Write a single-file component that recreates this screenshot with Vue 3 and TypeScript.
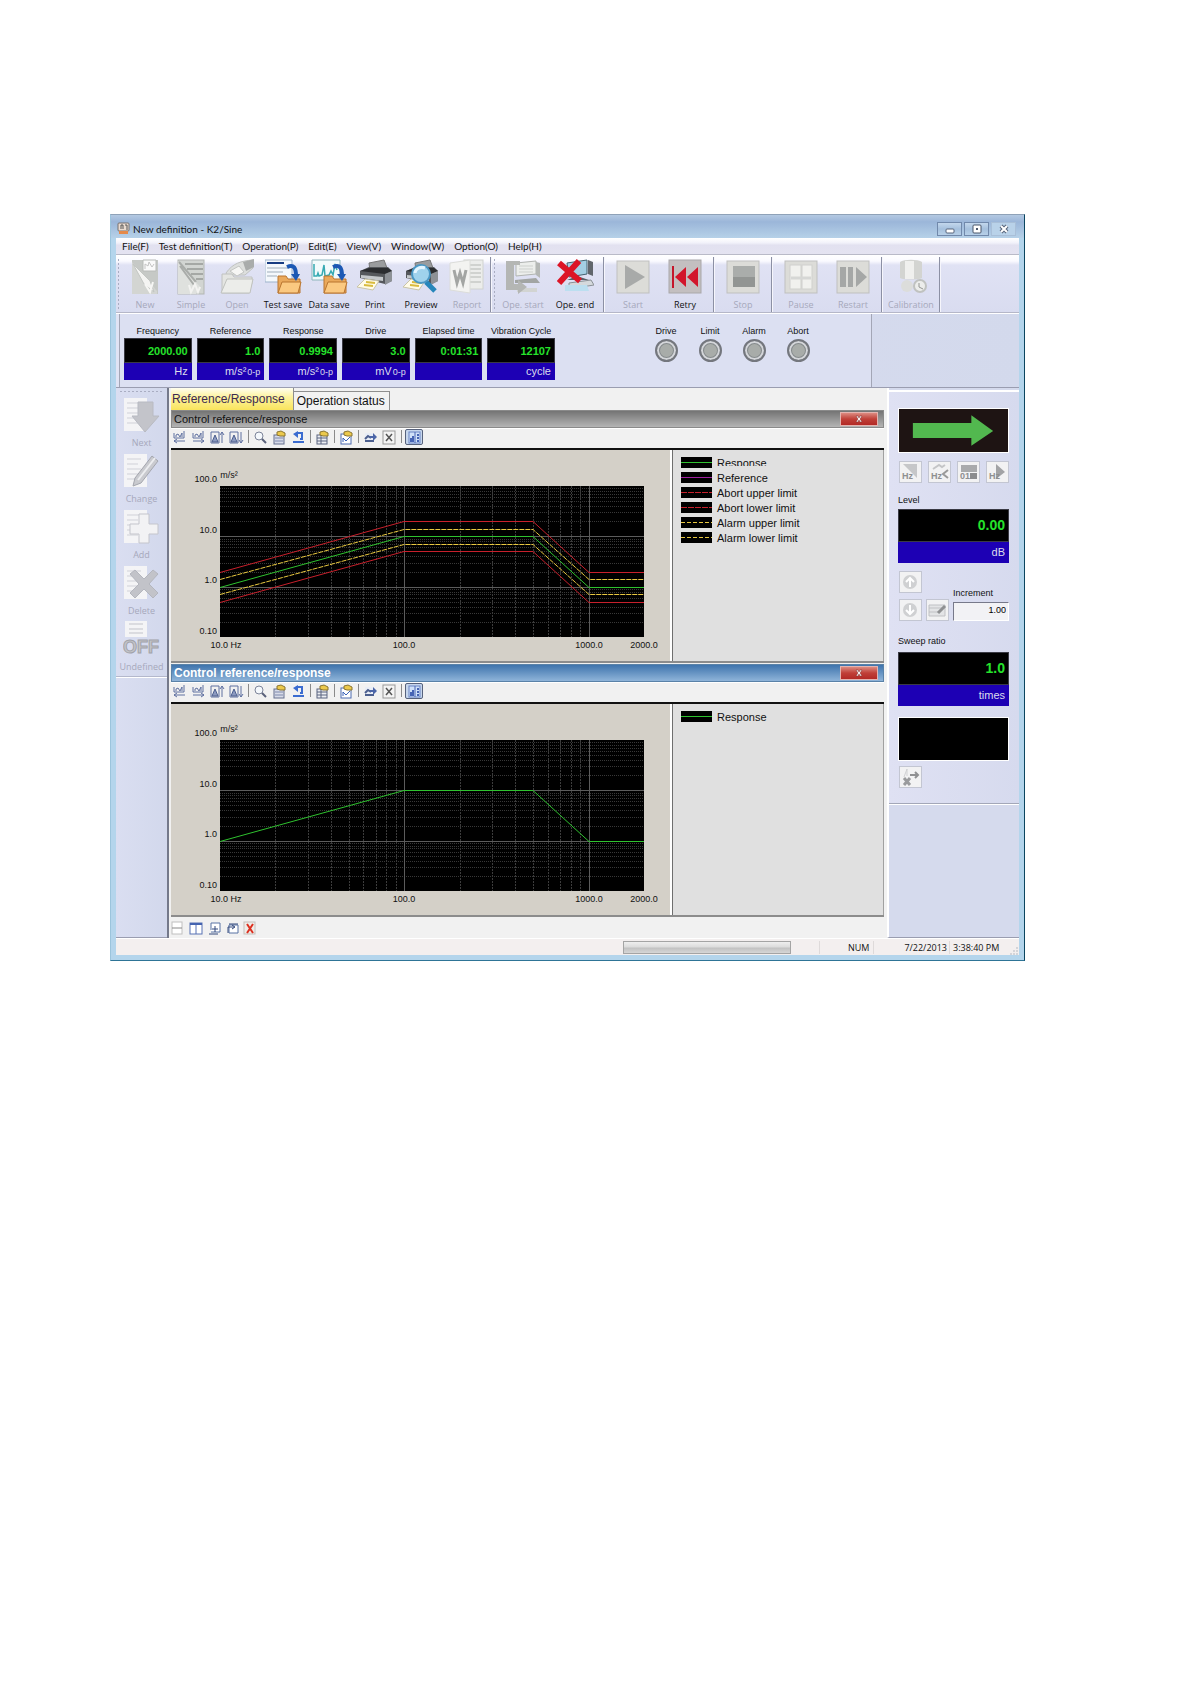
<script setup lang="ts">
import { ref } from 'vue'

interface Tool {
  label: string
  icon: string
  enabled?: boolean
}

interface Trace {
  name: string
  color: string
  factor: number
  dash?: string
  swatchDash?: string
  hidden?: boolean
}

const menus: string[] = [
  'File(F)', 'Test definition(T)', 'Operation(P)', 'Edit(E)',
  'View(V)', 'Window(W)', 'Option(O)', 'Help(H)',
]

const folder = (front: string, back: string, edge: string): string =>
  `<path d="M13 34V17h8l2 3h12v14z" fill="${back}" stroke="${edge}"/><path d="M13 34l4-11h19l-3 11z" fill="${front}" stroke="${edge}"/>`

const curl = '<path d="M22 8c7-3 9 1 9 9" fill="none" stroke="#1c58b4" stroke-width="4"/><path d="M26 15h9l-4 7z" fill="#1c58b4"/>'

const printer = '<path d="M12 4l15-3 3 8-17 3z" fill="#9a9c9e" stroke="#777"/><path d="M3 12l9-4h19l4 4v10l-7 3L3 19z" fill="#55585c"/><path d="M3 12l9-3h19l4 3-7 3z" fill="#2b2d30"/><path d="M28 15l7-3v10l-7 4z" fill="#8d9196"/><path d="M4 16l22 2v4L4 19z" fill="#c4c8cb"/><path d="M8 20l14 2-6 9-16-3z" fill="#fffbe8" stroke="#c9c4a6"/><path d="M9 23l9 1M7 26l9 1" stroke="#d9bb3e" stroke-width="2"/>'

const square = '<rect x="2" y="2" width="32" height="32" fill="#dcdcd8" stroke="#bfc0bf"/>'

const bigIcons: Record<string, string> = {
  new: '<rect x="5" y="1" width="26" height="34" fill="#c6c9c6"/><path d="M16 1h13v11H16z" fill="#fafafa" stroke="#b8bbb8"/><path d="M18 10V5l3 2 1-4 3 5 2-3" fill="none" stroke="#c4c4c4"/><path d="M5 3l25 29v3H5z" fill="#d3d5d2"/><path d="M6 5l17 17 4 11-10-8z" fill="#f4f4f2" stroke="#c3c6c3"/><path d="M18 25l5 8 3-10" fill="none" stroke="#f6f6f4" stroke-width="2"/>',
  simple: '<rect x="5" y="1" width="26" height="34" fill="#d2d5d2" stroke="#b3b6b3"/><path d="M12 5h18M14 10h16M18 15h12M23 20h7" stroke="#a5a8a5" stroke-width="2"/><path d="M5 2l23 27-5 6H5z" fill="#dfe1de"/><path d="M6 3l17 20M7 7l14 19" stroke="#a9aca9" stroke-width="2"/><path d="M16 26l2 7 4-8 3 8 2-5" fill="none" stroke="#f3f3f1" stroke-width="2"/>',
  open: '<path d="M7 14C14 4 22 2 34 1v8l-8 7H8z" fill="#dddfdd" stroke="#c0c2c0"/><path d="M24 3l11-3v8l-8 4z" fill="#a9acab"/><path d="M11 12l9-5 5 6-7 4z" fill="#f6f6f4" stroke="#c3c5c3"/><path d="M3 34V15h10l2 3h18v6l-3 10z" fill="#e4e5e2" stroke="#c0c2c0"/><path d="M2 34l6-14h26l-3 14z" fill="#ecedea" stroke="#c0c2be"/>',
  testsave: '<path d="M0 1h27v22H0z" fill="#f4f8fc" stroke="#9db3cb"/><path d="M2 4h17" stroke="#173c82" stroke-width="2"/><path d="M2 9h22M2 13h16M2 17h10" stroke="#9fadba"/>' + folder('#fbc980', '#eaa95b', '#b9752f') + curl,
  datasave: '<path d="M1 1h28v20H1z" fill="#f2fbfb" stroke="#8fb5bc"/><path d="M3 5v12h3l1-3 1 3 3-1 2-10 1 11 4-1 2-4 2 4 2-11 2 6" fill="none" stroke="#36aab2" stroke-width="1.5"/>' + folder('#fbc980', '#eaa95b', '#b9752f') + curl,
  print: printer,
  preview: printer + '<path d="M23 23l9 9" stroke="#2686ba" stroke-width="5"/><circle cx="18" cy="15" r="9" fill="#9fd2ec" stroke="#4a97c4" stroke-width="2"/><path d="M12 14a7 6 0 0 1 10-5" fill="none" stroke="#e3f5ff" stroke-width="3"/>',
  report: '<rect x="15" y="1" width="19" height="29" fill="#ecedeb" stroke="#d0d2cf"/><path d="M21 6h11M21 10h11M21 14h11M21 18h11M21 23h11" stroke="#b4b7b3"/><path d="M1 4l20-3v33L1 31z" fill="#f3f3f1" stroke="#dcddda"/><path d="M5 11l3 13 3-10 3 10 3-13" fill="none" stroke="#a3a5a3" stroke-width="3"/>',
  opestart: '<path d="M11 4l20-2v13l-20 2z" fill="#eceeec" stroke="#b1b4b1"/><path d="M14 7h14M14 10h14M14 13h14" stroke="#cdd0cd"/><path d="M10 21l21-2 4 5H10z" fill="#a2a5a3"/><path d="M31 3l4 1v15l-4-3z" fill="#b4b7b5"/><path d="M12 29h20v4H12z" fill="#d2d4d2"/><path d="M1 2h14v4H9v19h4v-4l9 7-9 7v-4H1z" fill="#b4b6b4"/>',
  opeend: '<path d="M10 4l20-3v14l-18 3z" fill="#a4cfe4" stroke="#43626f"/><path d="M20 17l12 4H10z" fill="#596068"/><path d="M31 1l5 2v14l-5-2z" fill="#61666c"/><path d="M12 24l22-3 3 5-25 4z" fill="#d5d9dc" stroke="#8a9095"/><path d="M8 26h22l2 6H8z" fill="#bcdff0"/><path d="M2 4l21 18M22 2L2 24" stroke="#dc1526" stroke-width="6"/>',
  start: square + '<path d="M10 6v24l20-12z" fill="#a8aaa9"/>',
  retry: '<rect x="2" y="1" width="32" height="33" fill="#c3bfc0" stroke="#a9a8aa"/><path d="M5 7h2v22H5z" fill="#c5162b"/><path d="M19 8v20L8 18zM31 8v20L20 18z" fill="#d2152b"/>',
  stop: square + '<rect x="8" y="7" width="22" height="11" fill="#aaadab"/><rect x="8" y="18" width="22" height="10" fill="#929593"/>',
  pause: square + '<rect x="7" y="6" width="11" height="24" fill="#f1f1ee" stroke="#cfd0cd"/><rect x="19" y="6" width="10" height="24" fill="#f1f1ee" stroke="#cfd0cd"/><path d="M8 19h20" stroke="#d6d7d5" stroke-width="3"/>',
  restart: square + '<path d="M5 8h6v20H5zM13 8h5v20h-5zM21 8v20l11-10z" fill="#a5a7a6"/>',
  calibration: '<path d="M7 3c4-3 18-3 22 0v16c-4 2-18 2-22 0z" fill="#d3d4d1"/><path d="M12 2h9v18h-9z" fill="#f0f0ee"/><circle cx="14" cy="27" r="6" fill="#dcdddb"/><circle cx="27" cy="27" r="6" fill="#ecedeb" stroke="#c0c2c0" stroke-width="2"/><path d="M26 24v4l4 2" fill="none" stroke="#949694"/>',
}

const sheet = '<rect x="1" y="1" width="23" height="33" fill="#f4f4f6"/><path d="M4 6h14M4 11h11M4 16h14M4 21h11M4 26h11" stroke="#d0d1d8"/>'

const sideIcons: Record<string, string> = {
  next: sheet + '<path d="M15 5h15v14h6L22 35 9 19h6z" fill="#c3c4ca" stroke="#b8bac2"/>',
  change: sheet + '<path d="M12 25L29 3l6 5-17 22-8 3z" fill="#c9cacf" stroke="#a4a6ae"/><path d="M15 27L32 5" stroke="#ecedf0" stroke-width="2"/>',
  add: sheet + '<path d="M16 5h10v10h9v10h-9v9H16v-9H7V15h9z" fill="#f2f2f4" stroke="#c4c5cc"/>',
  delete: sheet + '<path d="M7 9l5-4 9 9 9-9 5 4-9 10 9 9-5 5-9-9-9 9-5-5 9-9z" fill="#c2c3c9" stroke="#b4b6be"/>',
  undefined: '<path d="M2 0h22v16H2z" fill="#f4f4f6"/><path d="M6 3h14M6 8h14M6 12h14" stroke="#c2c3ca"/><text x="18" y="32" text-anchor="middle" font-family="Liberation Sans, Arial, sans-serif" font-weight="bold" font-size="18" fill="#c4c5ca" stroke="#a2a3a9">OFF</text>',
}

const mini = 'fill="none" stroke="#5f70a0"'
const hand = '<path d="M5 2l4-1 4 2v3H8L5 5z" fill="#ecc94c" stroke="#8a7530"/>'
const chartIcons: Record<string, string> = {
  left: `<path d="M2 8V3M2 8h10V1M4 7V5l2-1 2 3 2-4v4" ${mini}/><path d="M13 11H2M5 9l-3 2 3 2" ${mini}/>`,
  right: `<path d="M2 8V3M2 8h10V1M4 7V5l2-1 2 3 2-4v4" ${mini}/><path d="M2 11h11M10 9l3 2-3 2" ${mini}/>`,
  up: `<path d="M1 2h8v11H1z" ${mini}/><path d="M2 12l3-7 3 7z" fill="#8c9ac0" stroke="#4c5f8e"/><path d="M12 13V2M10 5l2-3 2 3" ${mini}/>`,
  down: `<path d="M1 2h8v11H1z" ${mini}/><path d="M2 12l3-7 3 7z" fill="#8c9ac0" stroke="#4c5f8e"/><path d="M12 2v11M10 10l2 3 2-3" ${mini}/>`,
  zoom: '<circle cx="6" cy="6" r="4" fill="#f4f8fc" stroke="#7c8499"/><path d="M9 9l4 4" stroke="#59617a" stroke-width="2"/>',
  props: '<rect x="2" y="5" width="10" height="9" fill="#d7dbe8" stroke="#66708f"/><path d="M3 8h8M3 11h8" stroke="#7f89ad"/>' + hand,
  undo: '<path d="M5 3h6v6H9" fill="none" stroke="#3b6cd0" stroke-width="2"/><path d="M2 4l5-3v7z" fill="#3b6cd0"/><path d="M2 12h11" stroke="#3b6cd0" stroke-width="2"/>',
  table: '<rect x="2" y="5" width="10" height="9" fill="#eceef2" stroke="#5b6480"/><path d="M2 8h10M2 11h10M6 5v9" stroke="#5b6480"/>' + hand,
  scale: '<rect x="2" y="4" width="10" height="10" fill="#fff" stroke="#4f6db0"/><path d="M4 12V8l3 3 4-4" fill="none" stroke="#3b62b8"/>' + hand,
  export: '<path d="M2 3h8v8H2z" fill="#e8edf6"/><path d="M2 11h9M2 9l3-3 3 2" fill="none" stroke="#4c5f8e" stroke-width="2"/><path d="M7 6h3V3l4 4-4 4V8H7z" fill="#4c66a8"/>',
  excel: '<rect x="1" y="1" width="12" height="13" fill="#f4f4f4" stroke="#999"/><path d="M4 4l6 7M10 4l-6 7" stroke="#555" stroke-width="1.5"/>',
  legend: '<rect x="2" y="2" width="11" height="11" fill="#cfe0f8" stroke="#6a84c4"/><path d="M8 2v11" stroke="#4a66b4"/><path d="M4 12V8M6 12V6M10 5h2M10 8h2M10 11h2" stroke="#4664b4" stroke-width="2"/>',
}
const chartTools: string[] = [
  'left', 'right', 'up', 'down', '|', 'zoom', 'props', 'undo', '|',
  'table', '|', 'scale', '|', 'export', 'excel', '|', 'legend',
]

const paneIcons: { label: string; art: string }[] = [
  { label: 'Split rows', art: '<rect x="1" y="1" width="10" height="12" fill="#fff" stroke="#c0c0c0"/><path d="M1 7h10" stroke="#888"/>' },
  { label: 'Split columns', art: '<rect x="1" y="2" width="12" height="11" fill="#fff" stroke="#5873b4"/><path d="M7 2v11" stroke="#5873b4"/><path d="M1 3h12" stroke="#4463b0" stroke-width="2"/>' },
  { label: 'Minimize', art: '<path d="M4 9V2h9v9H4" fill="#fff" stroke="#5873a4"/><path d="M2 13h9M5 8h6M8 5v6" stroke="#33487c"/>' },
  { label: 'Restore', art: '<path d="M4 4h9v8H4z" fill="#fff" stroke="#5873a4"/><path d="M3 12V6h6M7 4l3 2-3 2M4 3h9" fill="none" stroke="#33487c"/>' },
  { label: 'Close', art: '<rect x="1" y="1" width="11" height="12" fill="#f0ece8" stroke="#c4c0bc"/><path d="M4 3l6 9M10 3l-6 9" stroke="#dc3020" stroke-width="2"/>' },
]

const toolGroups: Tool[][] = [
  [
    { label: 'New', icon: 'new' },
    { label: 'Simple', icon: 'simple' },
    { label: 'Open', icon: 'open' },
    { label: 'Test save', icon: 'testsave', enabled: true },
    { label: 'Data save', icon: 'datasave', enabled: true },
    { label: 'Print', icon: 'print', enabled: true },
    { label: 'Preview', icon: 'preview', enabled: true },
    { label: 'Report', icon: 'report' },
  ],
  [
    { label: 'Ope. start', icon: 'opestart' },
    { label: 'Ope. end', icon: 'opeend', enabled: true },
  ],
  [
    { label: 'Start', icon: 'start' },
    { label: 'Retry', icon: 'retry', enabled: true },
  ],
  [{ label: 'Stop', icon: 'stop' }],
  [
    { label: 'Pause', icon: 'pause' },
    { label: 'Restart', icon: 'restart' },
  ],
  [{ label: 'Calibration', icon: 'calibration' }],
]

const meters = [
  { label: 'Frequency', value: '2000.00', unit: 'Hz' },
  { label: 'Reference', value: '1.0', unit: 'm/s²', suffix: '0-p' },
  { label: 'Response', value: '0.9994', unit: 'm/s²', suffix: '0-p' },
  { label: 'Drive', value: '3.0', unit: 'mV', suffix: '0-p' },
  { label: 'Elapsed time', value: '0:01:31', unit: '' },
  { label: 'Vibration Cycle', value: '12107', unit: 'cycle' },
]

const lamps: string[] = ['Drive', 'Limit', 'Alarm', 'Abort']

const sideTools: Tool[] = [
  { label: 'Next', icon: 'next' },
  { label: 'Change', icon: 'change' },
  { label: 'Add', icon: 'add' },
  { label: 'Delete', icon: 'delete' },
  { label: 'Undefined', icon: 'undefined' },
]

const modes: { label: string; art: string; text: string }[] = [
  { label: 'Hold frequency', art: '<path d="M3 2h14v14z" fill="#c6c7c9"/>', text: 'Hz' },
  { label: 'Shift frequency', art: '<path d="M4 7l6-4 3 2 3-2" fill="none" stroke="#c4c5c7" stroke-width="2"/><path d="M19 8l-5 4 5 4" fill="none" stroke="#999" stroke-width="2"/>', text: 'Hz' },
  { label: 'Level', art: '<path d="M3 3h16v7H3z" fill="#a9aaac"/><path d="M12 11h7v6h-7z" fill="#8b8c8e"/>', text: '01' },
  { label: 'Sweep', art: '<path d="M9 2l9 8-9 7z" fill="#a2a3a5"/>', text: 'Hz' },
]

const green = '#2fc22f'
const red = '#c8202c'
const amber = '#e8c840'
const response: Trace = { name: 'Response', color: green, factor: 1 }
const panes: { title: string; active: boolean; traces: Trace[] }[] = [
  {
    title: 'Control reference/response',
    active: false,
    traces: [
      response,
      { name: 'Reference', color: '#a020a0', factor: 1, hidden: true },
      { name: 'Abort upper limit', color: red, factor: 2, swatchDash: '6 1' },
      { name: 'Abort lower limit', color: red, factor: 0.5, swatchDash: '6 1' },
      { name: 'Alarm upper limit', color: amber, factor: 1.41, dash: '5 1', swatchDash: '4 2' },
      { name: 'Alarm lower limit', color: amber, factor: 0.708, dash: '5 1', swatchDash: '4 2' },
    ],
  },
  { title: 'Control reference/response', active: true, traces: [response] },
]

const plot = { x: 49, y: 36, w: 424, h: 151 }
const profile: [number, number][] = [[10, 1], [100, 10], [500, 10], [1000, 1], [2000, 1]]
const px = (hz: number): number => Math.round(plot.x + (plot.w * Math.log10(hz / 10)) / Math.log10(200))
const py = (v: number): number => Math.round(plot.y + (plot.h * (2 - Math.log10(v))) / 3)
const points = (t: Trace): string => profile.map(([hz, v]) => `${px(hz)},${py(v * t.factor) + 0.5}`).join(' ')

const minorX: number[] = []
for (const decade of [10, 100, 1000]) {
  for (let k = 2; k < 10; k++) if (decade * k < 2000) minorX.push(px(decade * k))
}
const minorY: number[] = []
for (const decade of [0.1, 1, 10]) for (let k = 2; k < 10; k++) minorY.push(py(decade * k))
const majorX = [px(100), px(1000)]
const majorY = [py(10), py(1)]

const activeTab = ref(0)
const tabs = ['Reference/Response', 'Operation status']
const increment = ref('1.00')
</script>

<template>
  <div class="page">
    <main class="window">
      <header class="titlebar">
        <svg class="app-icon" viewBox="0 0 13 13">
          <rect x="1" y="1" width="11" height="8" rx="1" fill="#eadbd0" stroke="#76706e" />
          <path d="M4 7V3h2v4M8 3h2v5" fill="none" stroke="#555" />
          <path d="M2 9h9v3H2z" fill="#e58a4a" />
        </svg>
        <h1>New definition - K2/Sine</h1>
        <div class="caption">
          <button aria-label="Minimize"><svg viewBox="0 0 12 12"><rect x="2" y="6" width="8" height="4" rx="1" fill="#fff" stroke="#56657c" /></svg></button>
          <button aria-label="Maximize"><svg viewBox="0 0 12 12"><rect x="2" y="2" width="8" height="8" rx="1" fill="#fff" stroke="#4a566a" /><rect x="5" y="5" width="2" height="2" fill="#4a566a" /></svg></button>
          <button aria-label="Close" class="plain"><svg viewBox="0 0 12 12"><path d="M3 3l6 6M9 3l-6 6" stroke="#56657c" stroke-width="4" /><path d="M3 3l6 6M9 3l-6 6" stroke="#fff" stroke-width="2" /></svg></button>
        </div>
      </header>

      <div class="client">
        <nav class="menubar">
          <button v-for="m in menus" :key="m">{{ m }}</button>
        </nav>

        <div class="toolbar">
          <template v-for="(group, gi) in toolGroups" :key="gi">
            <span v-if="gi < 2" class="grip"></span>
            <div class="group" :class="{ narrow: gi === 0 }">
              <button v-for="t in group" :key="t.label" class="tool" :disabled="!t.enabled">
                <svg viewBox="0 0 37 37" v-html="bigIcons[t.icon]"></svg>
                <span>{{ t.label }}</span>
              </button>
            </div>
            <span class="sep"></span>
          </template>
        </div>

        <section class="readouts">
          <div class="meter-panel">
            <div class="meters">
              <div v-for="m in meters" :key="m.label" class="meter">
                <span class="caption-text">{{ m.label }}</span>
                <output class="value">{{ m.value }}</output>
                <span class="unit">{{ m.unit }}<small v-if="m.suffix">{{ m.suffix }}</small></span>
              </div>
            </div>
            <div class="lamps">
              <div v-for="l in lamps" :key="l" class="lamp">
                <span class="caption-text">{{ l }}</span>
                <i></i>
              </div>
            </div>
          </div>
        </section>

        <div class="body">
          <aside class="side">
            <div class="side-grip"></div>
            <div class="side-tools">
              <button v-for="t in sideTools" :key="t.label" class="tool" disabled>
                <svg viewBox="0 0 37 37" v-html="sideIcons[t.icon]"></svg>
                <span>{{ t.label }}</span>
              </button>
            </div>
          </aside>

          <section class="center">
            <div class="tabs" role="tablist">
              <button
                v-for="(t, i) in tabs" :key="t" role="tab" :aria-selected="activeTab === i"
                :class="{ active: activeTab === i }" @click="activeTab = i"
              >{{ t }}</button>
            </div>

            <article v-for="(pane, pi) in panes" :key="pi" class="pane" :class="{ current: pane.active }">
              <header>
                <h2>{{ pane.title }}</h2>
                <button class="close" aria-label="Close pane">
                  <svg viewBox="0 0 10 10"><path d="M2 2h2l1 2 1-2h2L6 5l2 3H6L5 6 4 8H2l2-3z" fill="#fff" stroke="#7d3030" stroke-width=".5" /></svg>
                </button>
              </header>
              <div class="chart-tools">
                <template v-for="(c, ci) in chartTools" :key="ci">
                  <i v-if="c === '|'"></i>
                  <button v-else :class="{ pressed: c === 'legend' }" :aria-label="c">
                    <svg viewBox="0 0 15 15" v-html="chartIcons[c]"></svg>
                  </button>
                </template>
              </div>
              <div class="chart-row">
                <div class="chart">
                  <svg viewBox="0 0 499 209" role="img" :aria-label="pane.title">
                    <rect :x="plot.x" :y="plot.y" :width="plot.w" :height="plot.h" fill="#000" />
                    <g stroke="#3c3c3c" stroke-dasharray="2 1">
                      <line v-for="x in minorX" :key="'x' + x" :x1="x + 0.5" :x2="x + 0.5" :y1="plot.y" :y2="plot.y + plot.h" />
                    </g>
                    <g stroke="#383838" stroke-dasharray="1 1">
                      <line v-for="y in minorY" :key="'y' + y" :x1="plot.x" :x2="plot.x + plot.w" :y1="y + 0.5" :y2="y + 0.5" />
                    </g>
                    <g stroke="#5c5c5c">
                      <line v-for="x in majorX" :key="'mx' + x" :x1="x + 0.5" :x2="x + 0.5" :y1="plot.y" :y2="plot.y + plot.h" />
                      <line v-for="y in majorY" :key="'my' + y" :x1="plot.x" :x2="plot.x + plot.w" :y1="y + 0.5" :y2="y + 0.5" />
                    </g>
                    <template v-for="t in pane.traces" :key="t.name">
                      <polyline v-if="!t.hidden" :points="points(t)" fill="none" :stroke="t.color" :stroke-dasharray="t.dash" />
                    </template>
                    <g class="axis" text-anchor="end">
                      <text x="46" y="32">100.0</text>
                      <text x="46" y="83">10.0</text>
                      <text x="46" y="133">1.0</text>
                      <text x="46" y="184">0.10</text>
                    </g>
                    <g class="axis" text-anchor="middle">
                      <text x="58" y="28">m/s²</text>
                      <text x="55" y="198">10.0 Hz</text>
                      <text x="233" y="198">100.0</text>
                      <text x="418" y="198">1000.0</text>
                      <text x="473" y="198">2000.0</text>
                    </g>
                  </svg>
                </div>
                <ul class="legend">
                  <li v-for="t in pane.traces" :key="t.name">
                    <svg viewBox="0 0 31 11">
                      <rect width="31" height="11" fill="#000" />
                      <line x1="0" x2="31" y1="5.5" y2="5.5" :stroke="t.color" :stroke-dasharray="t.swatchDash" />
                    </svg>
                    <span>{{ t.name }}</span>
                  </li>
                </ul>
              </div>
            </article>

            <div class="pane-tools">
              <button v-for="p in paneIcons" :key="p.label" :aria-label="p.label">
                <svg viewBox="0 0 14 14" v-html="p.art"></svg>
              </button>
            </div>
          </section>

          <aside class="control">
            <div class="control-inner">
              <div class="direction">
                <svg viewBox="0 0 110 43"><path d="M14 14h59V6l22 16-22 15v-8H14z" fill="#52b84f" /></svg>
              </div>
              <div class="modes">
                <button v-for="m in modes" :key="m.label" disabled :aria-label="m.label">
                  <svg viewBox="0 0 21 21">
                    <g v-html="m.art"></g>
                    <text x="2" y="17">{{ m.text }}</text>
                  </svg>
                </button>
              </div>
              <span class="caption-text">Level</span>
              <output class="value big">0.00</output>
              <span class="unit big">dB</span>
              <div class="step">
                <div class="step-buttons">
                  <button disabled aria-label="Level up">
                    <svg viewBox="0 0 21 21"><circle cx="10" cy="10" r="7" fill="#cfd0d2" /><path d="M10 15V6M6 10l4-4 4 4" fill="none" stroke="#fff" stroke-width="2" /></svg>
                  </button>
                  <button disabled aria-label="Level down">
                    <svg viewBox="0 0 21 21"><circle cx="10" cy="10" r="7" fill="#cfd0d2" /><path d="M10 5v9M6 10l4 4 4-4" fill="none" stroke="#fff" stroke-width="2" /></svg>
                  </button>
                  <button disabled aria-label="Edit increment">
                    <svg viewBox="0 0 21 21"><path d="M2 5h16v11H2z" fill="#e3e4e6" stroke="#c0c1c4" /><path d="M2 8h16M2 12h10" stroke="#c0c1c4" /><path d="M11 13l7-7" stroke="#8f9092" stroke-width="3" /></svg>
                  </button>
                </div>
                <div class="increment">
                  <label class="caption-text" for="increment">Increment</label>
                  <input id="increment" v-model="increment" type="text" />
                </div>
              </div>
              <span class="caption-text">Sweep ratio</span>
              <output class="value big">1.0</output>
              <span class="unit big">times</span>
              <div class="blank"></div>
              <div class="modes">
                <button disabled aria-label="Cancel sweep">
                  <svg viewBox="0 0 21 21"><path d="M4 10l3-8v7" fill="none" stroke="#d0d1d3" /><path d="M10 8h8M15 5l3 3-3 3" fill="none" stroke="#8f9092" stroke-width="2" /><path d="M4 11l6 7M10 11l-6 7" stroke="#9a9b9d" stroke-width="3" /></svg>
                </button>
              </div>
            </div>
          </aside>
        </div>

        <footer class="status">
          <div class="progress"></div>
          <span class="num">NUM</span>
          <span class="date">7/22/2013</span>
          <span class="time">3:38:40 PM</span>
          <svg class="resize" viewBox="0 0 8 8"><path d="M6 0h2v2H6zM6 3h2v2H6zM3 3h2v2H3zM6 6h2v2H6zM3 6h2v2H3zM0 6h2v2H0z" fill="#d4d4d8" /></svg>
        </footer>
      </div>
    </main>
  </div>
</template>

<style>
body {
  background: #fff;
}
</style>

<style scoped>
.page {
  padding: 214px 166px 100px 110px;
  font-family: "Liberation Sans", Arial, sans-serif;
  font-size: 9px;
  color: #111;
}
.page * {
  box-sizing: border-box;
}
button {
  display: flex;
  align-items: center;
  justify-content: center;
  border: 0;
  padding: 0;
  background: none;
  color: inherit;
  font: inherit;
}
svg {
  display: block;
  flex: none;
}
h1, h2 {
  margin: 0;
  font-weight: normal;
}
.window {
  padding: 0 5px 5px;
  border: 1px solid #9cc4dc;
  border-top-color: #8fa2b8;
  border-right-color: #0b4660;
  border-bottom-color: #2e7496;
  background: #b4d5ec;
}
.titlebar {
  display: flex;
  align-items: center;
  height: 23px;
  margin: 0 -5px;
  padding: 4px 8px 0 6px;
  background: linear-gradient(#b4c9e2, #9bb6d9 30%, #b6d1e8);
  font-family: Lato, "Open Sans", sans-serif;
}
.titlebar h1 {
  flex: 1;
  margin-left: 3px;
  font-size: 10px;
}
.app-icon {
  width: 13px;
  height: 13px;
}
.caption {
  display: flex;
  gap: 2px;
}
.caption button {
  width: 25px;
  height: 14px;
  border: 1px solid #7189ab;
  background: linear-gradient(#c3d7ec, #a5c0dd 50%, #b7d0e8);
}
.caption .plain {
  border-color: #a9bfd8;
  background: #b9d2e9;
}
.caption svg {
  width: 12px;
  height: 12px;
}
.client {
  background: #d9ddf0;
}
.menubar {
  display: flex;
  gap: 10px;
  height: 17px;
  padding-left: 6px;
  background: linear-gradient(#fff, #f2f2fa 30%, #e2e1f0 45%, #e4e3f1);
  border-bottom: 1px solid #b9bac8;
  font-family: Lato, "Open Sans", sans-serif;
  font-size: 10px;
}
.menubar button {
  height: 15px;
}
.toolbar {
  display: flex;
  height: 58px;
  border-bottom: 1px solid #b5b7c8;
  background: linear-gradient(#fff, #fafaff 6px, #e0e2f4 10px, #d9dcf0);
}
.grip {
  width: 4px;
  margin: 3px 1px;
  background: radial-gradient(circle, #a9adc2 1px, transparent 1px) 0 0 / 3px 4px;
}
.sep + .grip {
  width: 3px;
}
.group {
  display: flex;
}
.tool {
  flex-direction: column;
  justify-content: flex-start;
  width: 52px;
  padding-top: 4px;
  font-family: "Open Sans", "Noto Sans", sans-serif;
  font-size: 9px;
  line-height: 13px;
}
.narrow .tool {
  width: 46px;
}
.tool svg {
  width: 37px;
  height: 37px;
}
.tool span {
  margin-top: 2px;
  white-space: nowrap;
}
.tool:disabled {
  color: #a6a8bb;
}
.sep {
  width: 2px;
  margin: 2px 2px 0;
  border-left: 1px solid #8c90a4;
  border-right: 1px solid #f6f6fc;
}
.narrow + .sep {
  margin: 2px 0 0;
}
.readouts {
  height: 75px;
  padding: 0 147px 0 3px;
  border-top: 1px solid #fff;
  border-bottom: 1px solid #9a9db0;
  background: linear-gradient(90deg, #e0e3f4, #d9ddf0 30%, #d3d9ec);
}
.meter-panel {
  display: flex;
  justify-content: space-between;
  height: 100%;
  padding: 11px 51px 0 4px;
  border-left: 1px solid #a3a6b6;
  border-right: 1px solid #a3a6b6;
  background: #dce0f2;
}
.meters {
  display: grid;
  grid-template-columns: repeat(6, 1fr);
  gap: 5px;
  width: 431px;
}
.meter,
.lamp {
  display: flex;
  flex-direction: column;
}
.meter .caption-text,
.lamp .caption-text {
  text-align: center;
}
.caption-text {
  font-size: 9px;
  line-height: 13px;
  white-space: nowrap;
}
.value {
  height: 25px;
  padding: 0 3px;
  border: 1px solid #3a3a44;
  background: #000;
  color: #25e32b;
  font-size: 11px;
  font-weight: bold;
  line-height: 24px;
  text-align: right;
}
.unit {
  height: 17px;
  padding: 0 4px;
  background: #1d00b4;
  color: #dcdcec;
  font-size: 11px;
  line-height: 17px;
  text-align: right;
}
.unit small {
  margin-left: 1px;
  font-size: 9px;
}
.lamps {
  display: grid;
  grid-template-columns: repeat(4, 44px);
}
.lamp {
  align-items: center;
}
.lamp i {
  width: 23px;
  height: 23px;
  margin-top: 1px;
  border: 2px solid #74777e;
  border-radius: 50%;
  background: #a8aca9;
  box-shadow: 0 0 0 2px #d4d6da inset, 0 0 0 3px #858a8c inset;
}
.body {
  display: flex;
  height: 550px;
}
.side {
  flex: none;
  width: 51px;
  border-bottom: 1px solid #9a9db0;
  background: linear-gradient(90deg, #dadef1, #d2d8ec);
}
.side-grip {
  height: 3px;
  margin: 2px 3px;
  background: radial-gradient(circle, #a9adc2 1px, transparent 1px) 0 0 / 4px 3px;
}
.side-tools {
  height: 283px;
  border-bottom: 1px solid #fff;
  box-shadow: 0 -1px #b4b8cc inset;
}
.side-tools .tool {
  width: 51px;
  height: 56px;
  padding-top: 2px;
}
.center {
  display: flex;
  flex: 1;
  flex-direction: column;
  min-width: 0;
  padding: 0 3px 0 2px;
  border-left: 2px solid #74798a;
  background: #f1f1f1;
}
.tabs {
  display: flex;
  align-items: flex-end;
  height: 22px;
}
.tabs button {
  height: 19px;
  padding: 0 4px 0 3px;
  border: 1px solid #8e8e8e;
  border-bottom: 0;
  border-left: 0;
  background: #f2f2f2;
  font-size: 12px;
}
.tabs .active {
  height: 22px;
  padding: 0 8px 0 1px;
  border: 0;
  border-right: 1px solid #8e8e8e;
  background: linear-gradient(#fffef0, #fdf3a0 40%, #f9e45c);
  color: #3c2a50;
}
.pane {
  border-bottom: 2px solid #8c8c8c;
}
.pane > header {
  display: flex;
  align-items: center;
  justify-content: space-between;
  height: 18px;
  padding: 0 5px 0 2px;
  border: 1px solid #8a8a8a;
  background: linear-gradient(#747474, #b4b4b4);
}
.current > header {
  border-color: #5a82a8;
  background: linear-gradient(#3f74ad, #8fb4d9);
  color: #fff;
}
.pane h2 {
  font-size: 11px;
  line-height: 16px;
}
.current h2 {
  font-size: 12px;
  font-weight: bold;
}
.pane + .pane {
  margin-top: 1px;
}
.close {
  width: 38px;
  height: 14px;
  border: 1px solid #e3b4b0;
  background: linear-gradient(#dc8a80, #c04038 50%, #b32a26);
}
.close svg {
  width: 10px;
  height: 10px;
}
.chart-tools {
  display: flex;
  align-items: flex-start;
  height: 22px;
  border-top: 1px solid #fff;
  border-bottom: 2px solid #111;
  background: #f1f1f1;
}
.chart-tools button {
  width: 17px;
  height: 16px;
  margin-right: 2px;
}
.chart-tools svg {
  width: 15px;
  height: 15px;
}
.chart-tools i {
  width: 1px;
  height: 13px;
  margin: 1px 3px 0 1px;
  background: #8a8a8a;
}
.chart-tools .pressed {
  width: 18px;
  border: 1px solid #57627c;
  border-radius: 2px;
  background: #c6d6ec;
}
.chart-row {
  display: flex;
  height: 211px;
}
.chart {
  flex: none;
  width: 502px;
  border-right: 1px solid #6f6f6f;
  background: linear-gradient(90deg, #d4d0c8 499px, #fff 499px);
}
.chart svg {
  width: 499px;
  height: 209px;
}
.axis {
  font-size: 9px;
  fill: #111;
}
.legend {
  flex: 1;
  margin: 0;
  padding: 5px 0 0 8px;
  border-right: 1px solid #a0a0a0;
  background: #e0e0e0;
  font-size: 11px;
  list-style: none;
}
.legend li {
  display: flex;
  align-items: center;
  gap: 5px;
  height: 15px;
}
.legend svg {
  width: 31px;
  height: 11px;
}
.legend li:first-child:not(:last-child) span {
  display: flex;
  align-items: center;
  height: 7px;
  overflow: hidden;
}
.pane-tools {
  display: flex;
  align-items: center;
  gap: 4px;
  flex: 1;
}
.pane-tools svg {
  width: 14px;
  height: 14px;
}
.control {
  flex: none;
  width: 132px;
  padding-top: 2px;
  border-left: 2px solid #fff;
  border-bottom: 1px solid #9a9db0;
  background: #d5daed;
}
.control-inner {
  display: flex;
  flex-direction: column;
  height: 414px;
  padding: 16px 10px 0 9px;
  border-top: 2px solid #fff;
  border-bottom: 1px solid #a3a7b8;
  box-shadow: 0 1px #fff;
  background: linear-gradient(90deg, #dfe1f3, #d6daee);
}
.direction {
  height: 45px;
  border: 1px solid #fff;
  background: #1e1413;
}
.direction svg {
  width: 100%;
  height: 43px;
}
.modes {
  display: flex;
  justify-content: space-between;
  margin: 8px 0 11px;
  padding-left: 1px;
}
.modes button,
.step-buttons button {
  width: 23px;
  height: 22px;
  border: 1px solid #c3c6d2;
  background: #f2f2f3;
}
.modes svg,
.step-buttons svg {
  width: 21px;
  height: 21px;
}
.modes text {
  font-size: 9px;
  font-weight: bold;
  fill: #8e8f91;
}
.value.big {
  height: 33px;
  margin-top: 2px;
  font-size: 14px;
  line-height: 31px;
}
.unit.big {
  height: 21px;
  line-height: 21px;
}
.step {
  display: flex;
  align-items: flex-end;
  justify-content: space-between;
  margin: 8px 0 14px;
  padding-left: 1px;
}
.step-buttons {
  display: grid;
  grid-template-columns: 23px 23px;
  gap: 6px 4px;
}
.step-buttons button:first-child {
  grid-column: span 2;
}
.increment {
  display: flex;
  flex-direction: column;
  gap: 2px;
}
.increment input {
  width: 56px;
  height: 19px;
  padding: 0 2px 3px;
  border: 1px solid #fff;
  border-top-color: #77798a;
  border-left-color: #77798a;
  background: #f2f2f5;
  font: 9px "Liberation Sans", Arial, sans-serif;
  text-align: right;
}
.step + .caption-text + .value {
  margin-top: 4px;
}
.blank {
  height: 44px;
  margin-top: 11px;
  border: 1px solid #fff;
  background: #000;
}
.blank + .modes {
  margin: 5px 0 0;
}
.status {
  display: flex;
  align-items: center;
  height: 17px;
  padding-right: 1px;
  border-top: 1px solid #fff;
  background: #f3efef;
  font-family: "Open Sans", "Noto Sans", sans-serif;
  font-size: 9px;
}
.progress {
  width: 168px;
  height: 13px;
  margin-left: auto;
  border: 1px solid #a4a4a4;
  background: linear-gradient(#eee, #dcdcdc 45%, #c2c2c2 55%, #d6d6d6);
}
.num {
  width: 54px;
  margin-left: 28px;
  padding-left: 28px;
  border-left: 1px solid #dedada;
}
.date {
  width: 76px;
  padding: 0 2px;
  border-left: 1px solid #dedada;
  text-align: right;
}
.time {
  width: 61px;
  padding-left: 3px;
  border-left: 1px solid #dedada;
}
.resize {
  align-self: flex-end;
  width: 8px;
  height: 8px;
}
</style>
